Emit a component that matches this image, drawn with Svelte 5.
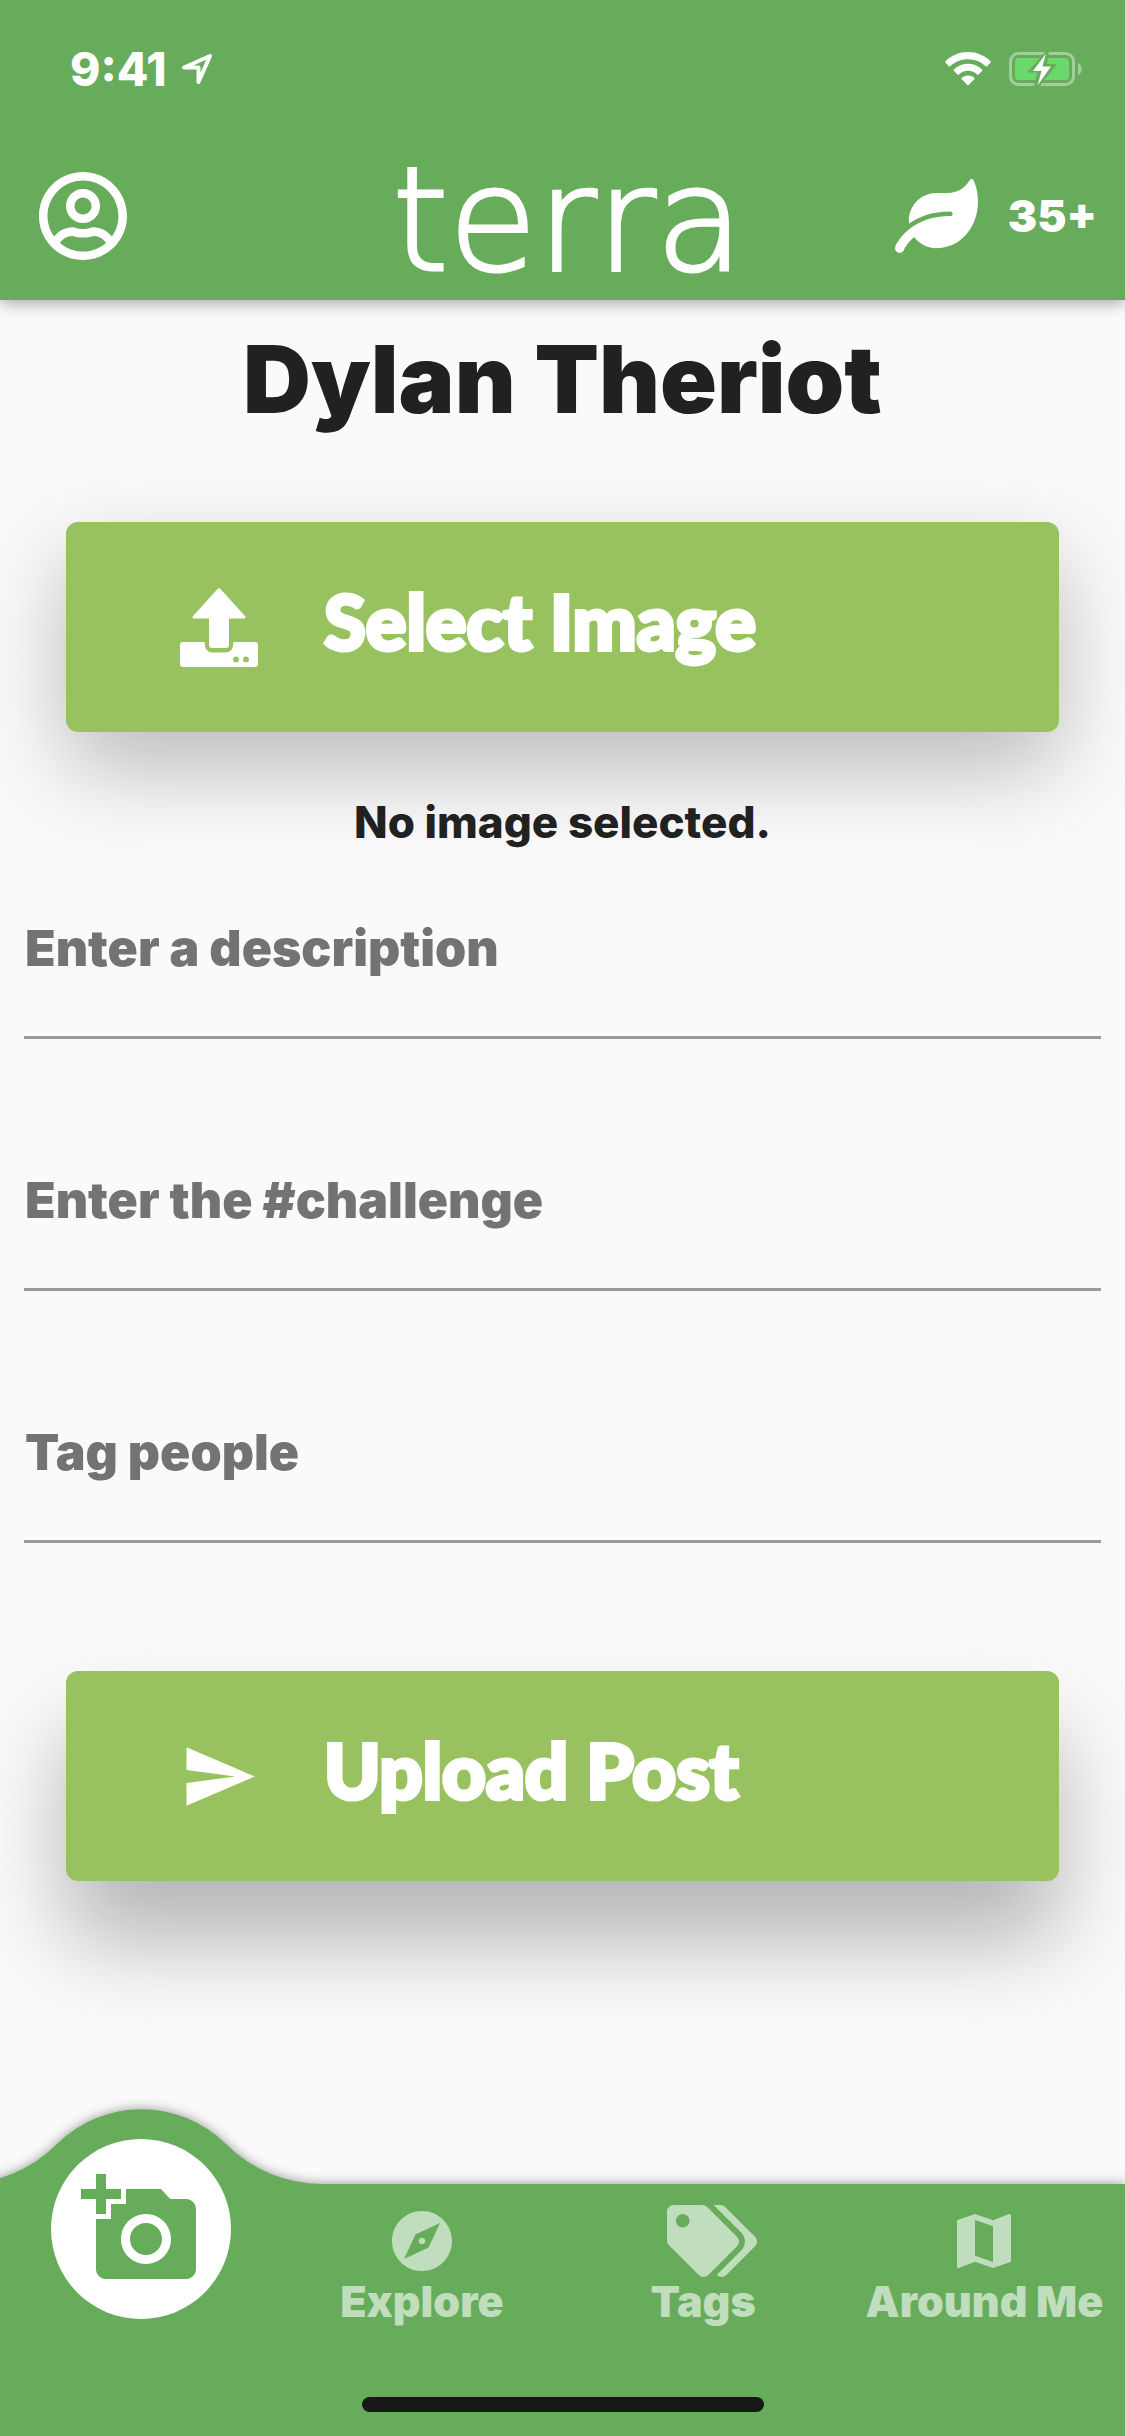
<script lang="ts">
  type Field = { id: string; hint: string; value: string };

  const user = "Dylan Theriot";
  const points = "35+";

  let fields = $state<Field[]>([
    { id: "description", hint: "Enter a description", value: "" },
    { id: "challenge", hint: "Enter the #challenge", value: "" },
    { id: "people", hint: "Tag people", value: "" },
  ]);
</script>

<div class="screen">
  <header>
    <div class="status">
      <span class="clock">
        9:41
        <svg class="location" viewBox="0 0 32 32" aria-hidden="true">
          <path d="M3 14.500 29 3 17.500 29V14.500Z" />
        </svg>
      </span>
      <span class="signals">
        <svg class="wifi" viewBox="0 0 46 34" aria-hidden="true">
          <path d="M23 0c8.600 0 16.600 3.300 22.500 9.200.5.500.5 1 0 1.500l-3.400 3.500c-.4.400-1 .4-1.400 0A25.500 25.500 0 0 0 23 7.300c-6.600 0-12.900 2.500-17.700 6.900-.4.400-1 .4-1.400 0L.500 10.700c-.5-.5-.5-1 0-1.500C6.400 3.300 14.400 0 23 0z" />
          <path d="M23 11.800c5.300 0 10.200 2 14 5.600.5.500.5 1 0 1.500l-3.500 3.500c-.4.400-1 .4-1.400 0a13.300 13.300 0 0 0-18.200 0c-.4.400-1 .4-1.400 0L9 18.900c-.5-.5-.5-1 0-1.500 3.800-3.600 8.700-5.600 14-5.600z" />
          <path d="M23 23.500c2.300 0 4.500.8 6.200 2.300.5.500.5 1 0 1.500l-5.500 5.600c-.4.400-1 .4-1.400 0l-5.500-5.600c-.5-.5-.5-1 0-1.500a9.500 9.500 0 0 1 6.200-2.300z" />
        </svg>
        <svg class="battery" viewBox="0 0 73 36" aria-hidden="true">
          <rect class="shell" x="1.500" y="2.500" width="63" height="31" rx="8" />
          <path class="cap" d="M69 12c5 2 5 10 0 12z" />
          <rect class="charge" x="6" y="7" width="54" height="22" rx="4" />
          <path class="bolt" d="M37 0 18 21.500h10L25 36h5L48 13H38l2-13z" />
          <path d="M37 2.500 24 20h8.500L28.500 34.500 42 15.500h-8.500z" />
        </svg>
      </span>
    </div>

    <div class="appbar">
      <button class="profile" type="button" aria-label="Profile">
        <svg viewBox="0 8 496 496" aria-hidden="true">
          <path d="M248 104c-53 0-96 43-96 96s43 96 96 96 96-43 96-96-43-96-96-96zm0 144c-26.500 0-48-21.500-48-48s21.500-48 48-48 48 21.500 48 48-21.500 48-48 48zm0-240C111 8 0 119 0 256s111 248 248 248 248-111 248-248S385 8 248 8zm0 448c-49.700 0-95.100-18.300-130.100-48.400 14.900-23 40.400-38.600 69.600-39.500 20.800 6.400 40.600 9.600 60.500 9.600s39.700-3.100 60.500-9.600c29.200 1 54.700 16.500 69.600 39.500-35 30.100-80.400 48.400-130.100 48.400zm162.700-84.100c-24.400-31.400-62.100-51.900-105.100-51.900-10.200 0-26 9.600-57.600 9.600-31.500 0-47.400-9.600-57.600-9.600-42.900 0-80.600 20.500-105.100 51.900C61.900 339.200 48 299.200 48 256c0-110.300 89.700-200 200-200s200 89.700 200 200c0 43.200-13.900 83.200-37.300 115.900z" />
        </svg>
      </button>
      <span class="logo">terra</span>
      <span class="points">
        <svg viewBox="0 0 576 512" aria-hidden="true">
          <path d="M546.2 9.700c-5.600-12.500-21.600-13-28.300-1.200C486.900 62.400 431.400 96 368 96h-80C182 96 96 182 96 288c0 7 .8 13.700 1.500 20.500C161.300 262.800 253.400 224 384 224c8.800 0 16 7.200 16 16s-7.200 16-16 16C132.600 256 26 410.100 2.400 468c-6.600 16.300 1.200 34.900 17.500 41.600 16.400 6.800 35-1.100 41.800-17.300 1.500-3.600 20.900-47.900 71.900-90.600 32.400 43.900 94 85.800 174.900 77.200C465.500 467.500 576 326.700 576 154.300c0-50.200-10.800-102.200-29.800-144.600z" />
        </svg>
        {points}
      </span>
    </div>
  </header>

  <main>
    <h1>{user}</h1>

    <button class="action select" type="button">
      <svg viewBox="0 0 78 79" aria-hidden="true">
        <path d="M37.500.900q1.500-1.500 3 0l24 26.500q2.500 3-1 3H49v26q0 3.500-3 3.500H32q-3 0-3-3.500v-26H14.500q-3.500 0-1-3z" />
        <path fill-rule="evenodd" d="M3 54h21.700v1.500q0 9 8.500 9h11.600q8.500 0 8.500-9V54H75q3 0 3 3v19q0 3-3 3H3q-3 0-3-3V57q0-3 3-3zm53 14.500a2.900 2.900 0 1 0 0 5.800 2.900 2.900 0 0 0 0-5.800zm10 0a2.900 2.900 0 1 0 0 5.800 2.900 2.900 0 0 0 0-5.800z" />
      </svg>
      <span>Select Image</span>
    </button>

    <p class="picked">No image selected.</p>

    <form id="post">
      {#each fields as f (f.id)}
        <input id={f.id} type="text" placeholder={f.hint} aria-label={f.hint} bind:value={f.value} />
      {/each}
    </form>

    <button class="action upload" type="submit" form="post">
      <svg viewBox="0 0 24 24" aria-hidden="true">
        <path d="M2.010 21 23 12 2.010 3 2 10l15 2-15 2z" />
      </svg>
      <span>Upload Post</span>
    </button>
  </main>

  <nav>
    <a class="post" href="#post" aria-label="New post" aria-current="page">
      <!-- hump that carries the active tab above the bar -->
      <svg class="hump" viewBox="-40 0 361 85" aria-hidden="true">
        <path d="M-40 75A136 136 0 0 0 56 35 120 120 0 0 1 225 35 136 136 0 0 0 321 75V85H-40Z" />
      </svg>
      <span class="disc">
        <svg viewBox="0 0 24 24" aria-hidden="true">
          <path d="M3 4V1h2v3h3v2H5v3H3V6H0V4h3zm3 6V7h3V4h7l1.830 2H21c1.100 0 2 .9 2 2v12c0 1.100-.9 2-2 2H5c-1.100 0-2-.9-2-2V10h3zm7 9c2.760 0 5-2.240 5-5s-2.240-5-5-5-5 2.240-5 5 2.240 5 5 5zm-3.200-5c0 1.770 1.430 3.200 3.200 3.200s3.200-1.430 3.200-3.200-1.430-3.200-3.200-3.200-3.200 1.430-3.200 3.200z" />
        </svg>
      </span>
    </a>
    <a class="tab" href="#explore">
      <svg viewBox="0 0 24 24" aria-hidden="true">
        <path d="M12 10.900c-.61 0-1.100.49-1.100 1.100s.49 1.100 1.100 1.100c.61 0 1.100-.49 1.100-1.100s-.49-1.100-1.100-1.100zM12 2C6.480 2 2 6.480 2 12s4.480 10 10 10 10-4.480 10-10S17.520 2 12 2zm2.190 12.190L6 18l3.810-8.190L18 6l-3.810 8.190z" />
      </svg>
      Explore
    </a>
    <a class="tab" href="#tags">
      <svg viewBox="0 0 512 512" aria-hidden="true">
        <path d="M497.941 225.941L286.059 14.059A48 48 0 0 0 252.118 0H48C21.490 0 0 21.490 0 48v204.118a48 48 0 0 0 14.059 33.941l211.882 211.882c18.744 18.745 49.136 18.746 67.882 0l204.118-204.118c18.745-18.745 18.745-49.137 0-67.882zM112 160c-26.510 0-48-21.490-48-48s21.490-48 48-48 48 21.490 48 48-21.490 48-48 48zm513.941 133.823L421.823 497.941c-18.745 18.745-49.137 18.745-67.882 0l-.36-.36L527.640 323.522c16.999-16.999 26.362-39.600 26.362-63.640s-9.362-46.641-26.362-63.640L331.397 0h48.721a48 48 0 0 1 33.941 14.059l211.882 211.882c18.745 18.745 18.745 49.137 0 67.882z" />
      </svg>
      Tags
    </a>
    <a class="tab" href="#around">
      <svg viewBox="0 0 24 24" aria-hidden="true">
        <path d="M20.500 3l-.16.030L15 5.100 9 3 3.360 4.900c-.21.070-.36.250-.36.480V20.500c0 .28.220.5.5.5l.16-.03L9 18.900l6 2.100 5.640-1.900c.21-.07.360-.25.360-.48V3.500c0-.28-.22-.5-.5-.5zM15 19l-6-2.110V5l6 2.110V19z" />
      </svg>
      Around Me
    </a>
    <div class="home"></div>
  </nav>
</div>

<style>
  :global(body) {
    margin: 0;
    background: #fafafa;
  }
  .screen {
    --green: #67ac5b;
    --lime: #98c15f;
    --ink: #212121;
    min-height: 100vh;
    display: flex;
    flex-direction: column;
    overflow: hidden;
    background: #fafafa;
    color: var(--ink);
    font-family: Inter, "Liberation Sans", sans-serif;
  }
  svg {
    display: block;
    fill: currentColor;
  }
  button {
    border: none;
    padding: 0;
    background: none;
    color: #fff;
    font: inherit;
    cursor: pointer;
  }
  header {
    background: var(--green);
    color: #fff;
    box-shadow: 0 3px 15px rgba(0, 0, 0, 0.35);
  }
  .status {
    display: flex;
    justify-content: space-between;
    padding: 42px 43px 36px 70px;
  }
  .clock, .signals {
    display: flex;
    align-items: center;
    line-height: 54px;
  }
  .clock {
    gap: 14px;
    font-size: 46px;
    font-weight: 800;
  }
  .signals {
    gap: 18px;
  }
  .location {
    width: 32px;
    height: 32px;
    fill: none;
    stroke: currentColor;
    stroke-width: 4;
    stroke-linejoin: round;
  }
  .wifi {
    width: 46px;
    height: 34px;
  }
  .battery {
    width: 73px;
    height: 36px;
  }
  .shell {
    fill: none;
    stroke: #fff;
    stroke-width: 3;
    opacity: 0.4;
  }
  .cap {
    opacity: 0.4;
  }
  .charge {
    fill: #6bd86b;
  }
  .bolt {
    fill: var(--green);
  }
  .appbar {
    display: grid;
    grid-template-columns: 1fr auto 1fr;
    align-items: center;
    height: 168px;
    padding: 0 28px 0 39px;
  }
  .profile {
    justify-self: start;
  }
  .profile svg {
    width: 88px;
    height: 88px;
  }
  .logo {
    padding-top: 8px;
    font-family: "DejaVu Sans", "DejaVu Sans Light", sans-serif;
    font-size: 144px;
    font-weight: 200;
    line-height: 160px;
    -webkit-text-stroke: 3px #fff;
  }
  .points {
    justify-self: end;
    display: flex;
    align-items: center;
    gap: 30px;
    font-size: 44px;
    font-weight: 900;
  }
  .points svg {
    width: 83px;
    height: 74px;
  }
  main {
    flex: 1;
    display: flex;
    flex-direction: column;
    padding: 27px 24px 120px;
  }
  h1 {
    margin: 0 0 91px;
    font-size: 94px;
    font-weight: 900;
    line-height: 104px;
    text-align: center;
  }
  .action {
    display: flex;
    align-items: center;
    gap: 66px;
    height: 210px;
    margin: 0 42px;
    padding: 0 114px;
    border-radius: 12px;
    background: var(--lime);
    font-family: Lato, sans-serif;
    font-size: 76px;
    font-weight: 900;
    -webkit-text-stroke: 4px #fff;
  }
  .action svg {
    flex: none;
    width: 78px;
    height: 79px;
  }
  .action span {
    padding-bottom: 14px;
  }
  .select {
    box-shadow: 0 36px 90px rgba(0, 0, 0, 0.26);
  }
  .upload {
    box-shadow: 0 60px 90px rgba(0, 0, 0, 0.28);
  }
  .picked {
    margin: 65px 0 49px;
    font-size: 44px;
    font-weight: 800;
    line-height: 50px;
    text-align: center;
    z-index: 1;
  }
  form {
    display: flex;
    flex-direction: column;
    gap: 109px;
    margin-bottom: 128px;
  }
  input {
    box-sizing: content-box;
    height: 58px;
    padding: 23px 1px 59px;
    border: none;
    border-bottom: 3px solid #9b9b9b;
    border-radius: 0;
    outline: none;
    background: transparent;
    color: var(--ink);
    font: inherit;
    font-size: 50px;
    font-weight: 900;
  }
  input::placeholder {
    color: #737373;
    opacity: 1;
  }
  nav {
    position: relative;
    display: grid;
    grid-template-columns: repeat(4, 1fr);
    background: var(--green);
    filter: drop-shadow(0 0 6px rgba(0, 0, 0, 0.4));
  }
  nav a {
    text-decoration: none;
  }
  .post {
    position: relative;
    display: flex;
    justify-content: center;
  }
  .hump {
    position: absolute;
    top: -75px;
    left: 50%;
    width: 361px;
    height: 85px;
    margin-left: -180px;
    fill: var(--green);
  }
  .disc {
    position: absolute;
    top: -45px;
    display: grid;
    place-items: center;
    width: 180px;
    height: 180px;
    border-radius: 50%;
    background: #fff;
    color: var(--green);
  }
  .disc svg {
    width: 120px;
    height: 120px;
  }
  .tab {
    display: flex;
    flex-direction: column;
    align-items: center;
    padding: 21px 0 72px;
    color: #c0ddbd;
    font-size: 43px;
    font-weight: 900;
    line-height: 48px;
    white-space: nowrap;
  }
  .tab svg {
    width: 72px;
    height: 72px;
    overflow: visible;
  }
  .home {
    grid-column: 1 / -1;
    justify-self: center;
    width: 402px;
    height: 15px;
    margin-bottom: 24px;
    border-radius: 8px;
    background: #171717;
  }
</style>
